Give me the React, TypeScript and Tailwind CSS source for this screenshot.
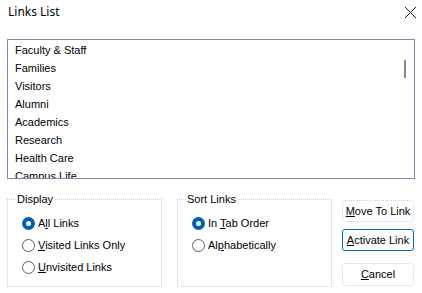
import React from "react";

const links = [
  "Faculty & Staff",
  "Families",
  "Visitors",
  "Alumni",
  "Academics",
  "Research",
  "Health Care",
  "Campus Life",
];

const Radio = ({
  checked,
  children,
}: {
  checked?: boolean;
  children: React.ReactNode;
}) => (
  <div className="flex h-[22px] items-center gap-[3px]">
    {checked ? (
      <span className="flex size-[13px] items-center justify-center rounded-full bg-[#005fb8]">
        <span className="size-[5px] rounded-full bg-white" />
      </span>
    ) : (
      <span className="size-[13px] rounded-full border border-[#5d5d5d] bg-white" />
    )}
    <span>{children}</span>
  </div>
);

const Group = ({
  title,
  children,
}: {
  title: string;
  children: React.ReactNode;
}) => (
  <fieldset className="h-[94px] w-[155px] border border-dotted border-[#c9c9ee] pl-[14px]">
    <legend className="-ml-[6px] px-[1px] leading-[13px]">{title}</legend>
    <div className="mt-[6px] flex flex-col">{children}</div>
  </fieldset>
);

const Button = ({
  focused,
  children,
  className = "",
}: {
  focused?: boolean;
  children: React.ReactNode;
  className?: string;
}) => (
  <button
    className={`flex h-[22px] w-[72px] items-center justify-center rounded-[3px] border ${
      focused ? "border-[#0067c0]" : "border-dotted border-[#cfcfee]"
    } bg-white ${className}`}
  >
    {children}
  </button>
);

export default function App() {
  return (
    <div
      className="h-[293px] w-[422px] bg-white text-[11px] text-black"
      style={{ fontFamily: '"Liberation Sans", Arial, sans-serif' }}
    >
      {/* Title bar */}
      <div className="flex h-[24px] items-center justify-between pl-[8px] pr-[5px]">
        <span
          className="text-[12px]"
          style={{ fontFamily: '"Noto Sans", "Segoe UI", sans-serif' }}
        >
          Links List
        </span>
        <svg width="13" height="13" viewBox="0 0 13 13" className="mt-[1px]">
          <path d="M1 1 L12 12 M12 1 L1 12" stroke="#222" strokeWidth="1" />
        </svg>
      </div>

      {/* List box */}
      <div className="ml-[7px] mt-[15px] flex h-[140px] w-[408px] overflow-hidden border border-[#8585a6]">
        <ul className="flex-1 pl-[7px] pt-[1px]">
          {links.map((l) => (
            <li key={l} className="flex h-[18px] items-center">
              {l}
            </li>
          ))}
        </ul>
        <div className="mr-[8px] mt-[20px] h-[18px] w-[2px] bg-[#8a8a8a]" />
      </div>

      {/* Bottom section */}
      <div className="ml-[7px] mt-[14px] flex">
        <Group title="Display">
          <Radio checked>
            A<u>l</u>l Links
          </Radio>
          <Radio>
            <u>V</u>isited Links Only
          </Radio>
          <Radio>
            <u>U</u>nvisited Links
          </Radio>
        </Group>
        <div className="ml-[15px]">
          <Group title="Sort Links">
            <Radio checked>
              In <u>T</u>ab Order
            </Radio>
            <Radio>
              Al<u>p</u>habetically
            </Radio>
          </Group>
        </div>
        <div className="ml-[10px] mt-[7px] flex flex-col">
          <Button>
            <u>M</u>ove To Link
          </Button>
          <Button focused className="mt-[7px]">
            <u>A</u>ctivate Link
          </Button>
          <Button className="mt-[12px] h-[23px]">
            <u>C</u>ancel
          </Button>
        </div>
      </div>
    </div>
  );
}
